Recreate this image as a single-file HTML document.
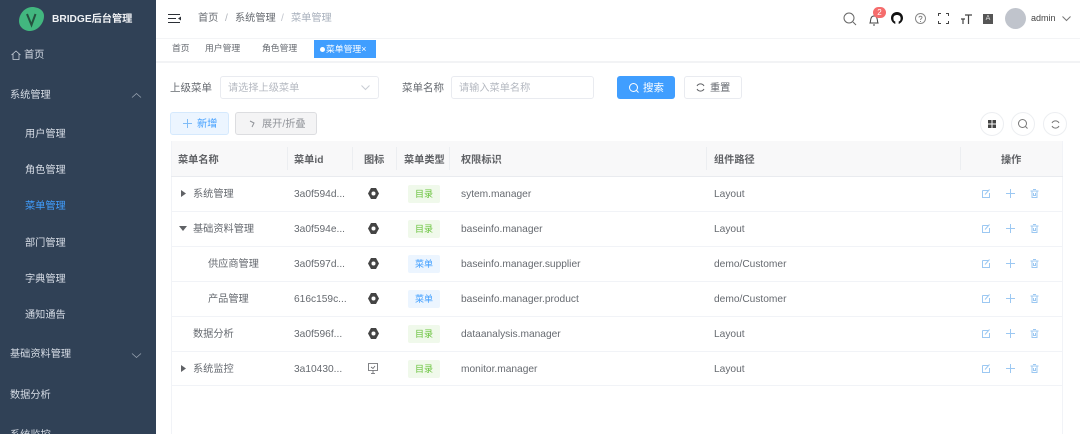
<!DOCTYPE html>
<html><head><meta charset="utf-8"><style>
html,body{margin:0;padding:0;background:#fff}
body{width:1080px;height:434px;overflow:hidden;position:relative;font-family:"Liberation Sans","Noto Sans CJK SC",sans-serif;font-size:10.2px;color:#666a70}
#w{position:absolute;left:0;top:0;width:1080px;height:434px;overflow:hidden;background:#fff;filter:blur(.35px)}
.a,.t{position:absolute}
.t{white-space:nowrap;line-height:16px;transform:translateY(-7px)}
.s{color:#d6dce5}
.h{font-weight:bold;color:#606266}
.g{position:absolute;left:408px;width:32px;height:18px;border-radius:2px;background:#f0f9eb;border:1px solid #f0f9eb;box-sizing:border-box;color:#67c23a;font-size:9px;line-height:16px;text-align:center}
.b{background:#ecf5ff;border-color:#ecf5ff;color:#409eff}
.l{position:absolute;left:171px;width:892px;height:1px;background:#f1f3f7}
.v{position:absolute;top:147px;height:23px;width:1px;background:#eceef1}
svg{position:absolute;overflow:visible}
.i{fill:none;stroke:#606266;stroke-width:1}
.o{fill:none;stroke:#9cc8f2;stroke-width:1}
</style></head><body><div id="w">
<div class="a" style="left:0;top:0;width:156px;height:434px;background:#304156"></div>
<svg style="left:19px;top:7px" width="25" height="25" viewBox="0 0 25 25"><path d="M13 0C19 0 25 3 25 9C25 17 18 24 11 24C5 24 0 20 0 14C0 7 6 0 13 0Z" fill="#42b77f"/><path d="M8 7L12.500 18L16.500 7" fill="none" stroke="#24523f" stroke-width="2"/></svg>
<div class="t" style="left:52px;top:19px;color:#f0f2f5;font-weight:bold;font-size:10.2px">BRIDGE后台管理</div>
<svg style="left:11px;top:50px" width="10" height="10" viewBox="0 0 10 10"><path d="M0.500 5L5 1L9.500 5M2 4V9.500H8V4" fill="none" stroke="#cbd3dc" stroke-width=".8"/></svg>
<div class="t s" style="left:24px;top:55px">首页</div>
<div class="t s" style="left:10px;top:95px">系统管理</div>
<svg style="left:132px;top:93px" width="9" height="5"><path d="M0 4.500L4.500 .5L9 4.500" fill="none" stroke="#9aa5b3" stroke-width=".8"/></svg>
<div class="t s" style="left:25px;top:134px">用户管理</div>
<div class="t s" style="left:25px;top:170px">角色管理</div>
<div class="t" style="left:25px;top:206px;color:#409eff">菜单管理</div>
<div class="t s" style="left:25px;top:243px">部门管理</div>
<div class="t s" style="left:25px;top:279px">字典管理</div>
<div class="t s" style="left:25px;top:315px">通知通告</div>
<div class="t s" style="left:10px;top:354px">基础资料管理</div>
<svg style="left:132px;top:353px" width="9" height="5"><path d="M0 .5L4.500 4.500L9 .5" fill="none" stroke="#9aa5b3" stroke-width=".8"/></svg>
<div class="t s" style="left:10px;top:395px">数据分析</div>
<div class="t s" style="left:10px;top:435px">系统监控</div>

<div class="l" style="left:156px;width:924px;top:38px;background:#f3f4f6"></div>
<svg style="left:168px;top:14px" width="13" height="10"><path d="M0 .5H12M0 4.500H8M0 8.500H12" stroke="#2b2f36" fill="none"/><path d="M13 2.500V6.500L10 4.500Z" fill="#2b2f36"/></svg>
<div class="t" style="left:198px;top:18px">首页</div>
<div class="t" style="left:225px;top:18px;color:#b0b4bb">/</div>
<div class="t" style="left:235px;top:18px">系统管理</div>
<div class="t" style="left:281px;top:18px;color:#c0c4cc">/</div>
<div class="t" style="left:291px;top:18px;color:#a8b0bc">菜单管理</div>

<svg style="left:843px;top:12px" width="14" height="14"><circle cx="6" cy="6" r="5" fill="none" stroke="#666"/><path d="M10 10L13 13" stroke="#666"/></svg>
<svg style="left:869px;top:15px" width="10" height="11"><path d="M1 8C2 6 1 1 5 1S8 6 9 8ZM4 10H6" fill="none" stroke="#444"/></svg>
<div class="a" style="left:873px;top:7px;width:13px;height:11px;border-radius:6px;background:#f56c6c;color:#fff;font-size:8px;line-height:11px;text-align:center">2</div>
<svg style="left:891px;top:12px" width="12" height="12" viewBox="0 0 12 12"><path d="M6 0C2.500 0 0 2.700 0 6C0 8.500 1.600 10.800 4.300 12V9.500C3 9.200 2.400 8.500 2.400 6.300C2.400 4 3.800 3 6 3S9.600 4 9.600 6.300C9.600 8.500 9 9.200 7.700 9.500V12C10.400 10.800 12 8.500 12 6C12 2.700 9.500 0 6 0Z" fill="#111"/></svg>
<svg style="left:915px;top:13px" width="11" height="11"><circle cx="5.500" cy="5.500" r="5" fill="none" stroke="#888"/><path d="M4 4.500C4 2.800 7 2.800 7 4.500C7 5.500 5.500 5.500 5.500 7M5.500 8V9" fill="none" stroke="#888"/></svg>
<svg style="left:938px;top:13px" width="11" height="11"><path d="M0.500 3V.5H3M8 .5H10.500V3M10.500 8V10.500H8M3 10.500H.5V8" fill="none" stroke="#444"/></svg>
<svg style="left:961px;top:14px" width="11" height="10"><path d="M0 5H4M2 5V10M4 1H11M7.500 1V10" fill="none" stroke="#444" stroke-width="1.200"/></svg>
<div class="a" style="left:983px;top:14px;width:10px;height:10px;background:#555;color:#ddd;font-size:7px;line-height:10px;text-align:center">A</div>
<div class="a" style="left:1005px;top:8px;width:21px;height:21px;border-radius:50%;background:#c0c4cc"></div>
<div class="t" style="left:1031px;top:17px;font-size:9px;color:#444">admin</div>
<svg style="left:1062px;top:16px" width="9" height="5"><path d="M.5 .5L4.500 4.500L8.500 .5" fill="none" stroke="#777"/></svg>

<div class="l" style="left:156px;width:924px;top:61px;height:2px;background:#f2f3f5"></div>
<div class="t" style="left:172px;top:47px;font-size:8.8px">首页</div>
<div class="t" style="left:205px;top:47px;font-size:8.8px">用户管理</div>
<div class="t" style="left:262px;top:47px;font-size:8.8px">角色管理</div>
<div class="a" style="left:314px;top:40px;width:62px;height:18px;background:#409eff;color:#fff;font-size:8.8px;line-height:18px;white-space:nowrap"><span style="display:inline-block;width:5px;height:5px;border-radius:50%;background:#fff;margin:0 1px 1px 6px;vertical-align:middle"></span>菜单管理×</div>

<div class="t" style="left:170px;top:87px;font-size:10.5px">上级菜单</div>
<div class="a" style="left:220px;top:76px;width:159px;height:23px;border:1px solid #e9ebf0;border-radius:3px;box-sizing:border-box"></div>
<div class="t" style="left:228px;top:88px;color:#b5b9c1">请选择上级菜单</div>
<svg style="left:361px;top:85px" width="9" height="5"><path d="M.5 .5L4.500 4.500L8.500 .5" fill="none" stroke="#c8ccd3"/></svg>
<div class="t" style="left:402px;top:87px;font-size:10.5px">菜单名称</div>
<div class="a" style="left:451px;top:76px;width:143px;height:23px;border:1px solid #e9ebf0;border-radius:3px;box-sizing:border-box"></div>
<div class="t" style="left:459px;top:88px;color:#b5b9c1">请输入菜单名称</div>
<div class="a" style="left:617px;top:76px;width:58px;height:23px;background:#409eff;border-radius:3px"></div>
<svg style="left:629px;top:83px" width="10" height="10"><circle cx="4.500" cy="4.500" r="4" fill="none" stroke="#fff"/><path d="M7.500 7.500L9.500 9.500" stroke="#fff"/></svg>
<div class="t" style="left:643px;top:87px;color:#fff;font-size:10.5px">搜索</div>
<div class="a" style="left:684px;top:76px;width:58px;height:23px;border:1px solid #e9ebf0;border-radius:3px;box-sizing:border-box"></div>
<svg style="left:696px;top:83px" width="9" height="9"><path d="M1 3A4 4 0 0 1 8 3M8 6A4 4 0 0 1 1 6" fill="none" stroke="#606266"/></svg>
<div class="t" style="left:710px;top:88px">重置</div>

<div class="a" style="left:170px;top:112px;width:59px;height:23px;background:#ecf5ff;border:1px solid #d5e9fd;border-radius:3px;box-sizing:border-box"></div>
<svg style="left:183px;top:119px" width="9" height="9"><path d="M4.500 0V9M0 4.500H9" stroke="#7fbcf7"/></svg>
<div class="t" style="left:197px;top:124px;color:#409eff">新增</div>
<div class="a" style="left:235px;top:112px;width:82px;height:23px;background:#f4f4f5;border:1px solid #dcdde0;border-radius:3px;box-sizing:border-box"></div>
<svg style="left:249px;top:120px" width="7" height="8"><path d="M1 1L5 3L3 7" fill="none" stroke="#909399"/></svg>
<div class="t" style="left:262px;top:124px;color:#909399">展开/折叠</div>

<div class="a" style="left:980px;top:112px;width:24px;height:24px;border:1px solid #eceef1;border-radius:50%;box-sizing:border-box"></div>
<svg style="left:988px;top:120px" width="8" height="8"><path d="M0 0H3.500V3.500H0ZM4.500 0H8V3.500H4.500ZM0 4.500H3.500V8H0ZM4.500 4.500H8V8H4.500Z" fill="#444"/></svg>
<div class="a" style="left:1011px;top:112px;width:24px;height:24px;border:1px solid #eceef1;border-radius:50%;box-sizing:border-box"></div>
<svg style="left:1018px;top:119px" width="10" height="10"><circle cx="4.500" cy="4.500" r="4" fill="none" stroke="#777"/><path d="M7.500 7.500L9.500 9.500" stroke="#777"/></svg>
<div class="a" style="left:1043px;top:112px;width:24px;height:24px;border:1px solid #eceef1;border-radius:50%;box-sizing:border-box"></div>
<svg style="left:1051px;top:120px" width="9" height="9"><path d="M1 3A4 4 0 0 1 8 3M8 6A4 4 0 0 1 1 6" fill="none" stroke="#777"/></svg>

<div class="a" style="left:171px;top:141px;width:892px;height:35px;background:#f8f8f9"></div>
<div class="a" style="left:171px;top:141px;width:1px;height:293px;background:#f1f3f7"></div>
<div class="a" style="left:1062px;top:141px;width:1px;height:293px;background:#f1f3f7"></div>
<div class="v" style="left:287px"></div><div class="v" style="left:352px"></div><div class="v" style="left:396px"></div><div class="v" style="left:449px"></div><div class="v" style="left:706px"></div><div class="v" style="left:960px"></div>
<div class="l" style="top:176px;background:#e9ebef"></div><div class="l" style="top:211px"></div><div class="l" style="top:246px"></div><div class="l" style="top:281px"></div><div class="l" style="top:316px"></div><div class="l" style="top:351px"></div><div class="l" style="top:385px"></div>
<div class="t h" style="left:178px;top:160px">菜单名称</div>
<div class="t h" style="left:294px;top:160px">菜单id</div>
<div class="t h" style="left:364px;top:160px">图标</div>
<div class="t h" style="left:404px;top:160px">菜单类型</div>
<div class="t h" style="left:461px;top:160px">权限标识</div>
<div class="t h" style="left:714px;top:160px">组件路径</div>
<div class="t h" style="left:1001px;top:160px">操作</div>

<svg style="left:181px;top:190px" width="5" height="7"><path d="M0 0L5 3.500L0 7Z" fill="#606266"/></svg>
<svg style="left:179px;top:226px" width="8" height="5"><path d="M0 0H8L4 5Z" fill="#606266"/></svg>
<svg style="left:181px;top:365px" width="5" height="7"><path d="M0 0L5 3.500L0 7Z" fill="#606266"/></svg>

<div class="t" style="left:193px;top:194px">系统管理</div>
<div class="t" style="left:193px;top:229px">基础资料管理</div>
<div class="t" style="left:208px;top:264px">供应商管理</div>
<div class="t" style="left:208px;top:299px">产品管理</div>
<div class="t" style="left:193px;top:334px">数据分析</div>
<div class="t" style="left:193px;top:369px">系统监控</div>

<div class="t" style="left:294px;top:194px">3a0f594d...</div>
<div class="t" style="left:294px;top:229px">3a0f594e...</div>
<div class="t" style="left:294px;top:264px">3a0f597d...</div>
<div class="t" style="left:294px;top:299px">616c159c...</div>
<div class="t" style="left:294px;top:334px">3a0f596f...</div>
<div class="t" style="left:294px;top:369px">3a10430...</div>

<svg style="left:368px;top:188px" width="11" height="11"><path d="M3 0H8L11 5.500L8 11H3L0 5.500Z" fill="#444"/><circle cx="5.500" cy="5.500" r="2" fill="#fff"/></svg>
<svg style="left:368px;top:223px" width="11" height="11"><path d="M3 0H8L11 5.500L8 11H3L0 5.500Z" fill="#444"/><circle cx="5.500" cy="5.500" r="2" fill="#fff"/></svg>
<svg style="left:368px;top:258px" width="11" height="11"><path d="M3 0H8L11 5.500L8 11H3L0 5.500Z" fill="#444"/><circle cx="5.500" cy="5.500" r="2" fill="#fff"/></svg>
<svg style="left:368px;top:293px" width="11" height="11"><path d="M3 0H8L11 5.500L8 11H3L0 5.500Z" fill="#444"/><circle cx="5.500" cy="5.500" r="2" fill="#fff"/></svg>
<svg style="left:368px;top:328px" width="11" height="11"><path d="M3 0H8L11 5.500L8 11H3L0 5.500Z" fill="#444"/><circle cx="5.500" cy="5.500" r="2" fill="#fff"/></svg>
<svg style="left:368px;top:363px" width="10" height="11"><path d="M.5 .5H9.500V7.500H.5ZM3 10.500H7M5 7.500V10.500M3 4L5 5.500L7 3" class="i" style="stroke-width:.8"/></svg>

<div class="g" style="top:185px">目录</div>
<div class="g" style="top:220px">目录</div>
<div class="g b" style="top:255px">菜单</div>
<div class="g b" style="top:290px">菜单</div>
<div class="g" style="top:325px">目录</div>
<div class="g" style="top:360px">目录</div>

<div class="t" style="left:461px;top:194px">sytem.manager</div>
<div class="t" style="left:461px;top:229px">baseinfo.manager</div>
<div class="t" style="left:461px;top:264px">baseinfo.manager.supplier</div>
<div class="t" style="left:461px;top:299px">baseinfo.manager.product</div>
<div class="t" style="left:461px;top:334px">dataanalysis.manager</div>
<div class="t" style="left:461px;top:369px">monitor.manager</div>

<div class="t" style="left:714px;top:194px">Layout</div>
<div class="t" style="left:714px;top:229px">Layout</div>
<div class="t" style="left:714px;top:264px">demo/Customer</div>
<div class="t" style="left:714px;top:299px">demo/Customer</div>
<div class="t" style="left:714px;top:334px">Layout</div>
<div class="t" style="left:714px;top:369px">Layout</div>

<svg style="left:982px;top:189px" width="60" height="9"><g class="o"><path d="M.5 1.500H6M.5 1.500V8.500H7.500V4M3 5.500L7.500 .5"/><path d="M28.500 0V9M24 4.500H33"/><path d="M48.500 2H56.500M50 2V8.500H55V2M51 .5H54M51.500 4V6.500H53.500V4"/></g></svg>
<svg style="left:982px;top:224px" width="60" height="9"><g class="o"><path d="M.5 1.500H6M.5 1.500V8.500H7.500V4M3 5.500L7.500 .5"/><path d="M28.500 0V9M24 4.500H33"/><path d="M48.500 2H56.500M50 2V8.500H55V2M51 .5H54M51.500 4V6.500H53.500V4"/></g></svg>
<svg style="left:982px;top:259px" width="60" height="9"><g class="o"><path d="M.5 1.500H6M.5 1.500V8.500H7.500V4M3 5.500L7.500 .5"/><path d="M28.500 0V9M24 4.500H33"/><path d="M48.500 2H56.500M50 2V8.500H55V2M51 .5H54M51.500 4V6.500H53.500V4"/></g></svg>
<svg style="left:982px;top:294px" width="60" height="9"><g class="o"><path d="M.5 1.500H6M.5 1.500V8.500H7.500V4M3 5.500L7.500 .5"/><path d="M28.500 0V9M24 4.500H33"/><path d="M48.500 2H56.500M50 2V8.500H55V2M51 .5H54M51.500 4V6.500H53.500V4"/></g></svg>
<svg style="left:982px;top:329px" width="60" height="9"><g class="o"><path d="M.5 1.500H6M.5 1.500V8.500H7.500V4M3 5.500L7.500 .5"/><path d="M28.500 0V9M24 4.500H33"/><path d="M48.500 2H56.500M50 2V8.500H55V2M51 .5H54M51.500 4V6.500H53.500V4"/></g></svg>
<svg style="left:982px;top:364px" width="60" height="9"><g class="o"><path d="M.5 1.500H6M.5 1.500V8.500H7.500V4M3 5.500L7.500 .5"/><path d="M28.500 0V9M24 4.500H33"/><path d="M48.500 2H56.500M50 2V8.500H55V2M51 .5H54M51.500 4V6.500H53.500V4"/></g></svg>
</div></body></html>
